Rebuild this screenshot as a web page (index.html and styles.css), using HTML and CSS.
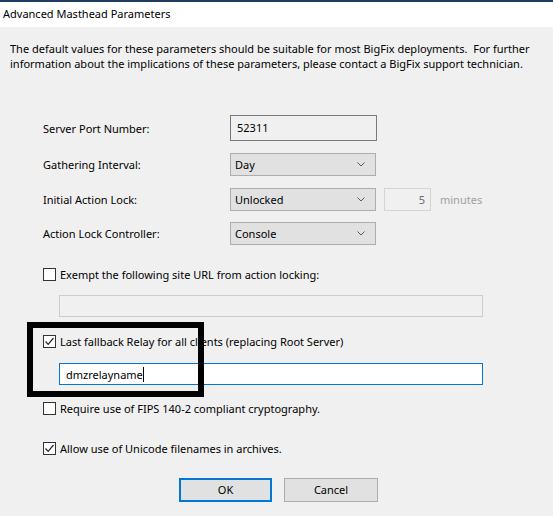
FILE: index.html
```html
<!DOCTYPE html>
<html>
<head>
<meta charset="utf-8">
<link rel="stylesheet" href="styles.css">
</head>
<body>
<div class="window">
  <div class="titlebar">Advanced Masthead Parameters</div>
  <div class="content">
    <p class="intro">The default values for these parameters should be suitable for most BigFix deployments.&nbsp; For further<br>information about the implications of these parameters, please contact a BigFix support technician.</p>
    <div class="form">
      <div class="row row-first">
        <span class="label">Server Port Number:</span>
        <div class="textbox readonly">52311</div>
      </div>
      <div class="row">
        <span class="label">Gathering Interval:</span>
        <div class="select"><span>Day</span><svg class="chev" width="8" height="5" viewBox="0 0 8 5"><path d="M0.5 0.5 L4 4 L7.5 0.5" fill="none" stroke="#5a5a5a" stroke-width="1"/></svg></div>
      </div>
      <div class="row">
        <span class="label">Initial Action Lock:</span>
        <div class="select"><span>Unlocked</span><svg class="chev" width="8" height="5" viewBox="0 0 8 5"><path d="M0.5 0.5 L4 4 L7.5 0.5" fill="none" stroke="#5a5a5a" stroke-width="1"/></svg></div>
        <div class="spin">5</div>
        <span class="unit">minutes</span>
      </div>
      <div class="row">
        <span class="label">Action Lock Controller:</span>
        <div class="select"><span>Console</span><svg class="chev" width="8" height="5" viewBox="0 0 8 5"><path d="M0.5 0.5 L4 4 L7.5 0.5" fill="none" stroke="#5a5a5a" stroke-width="1"/></svg></div>
      </div>
    </div>

    <div class="check c-exempt"><span class="box"></span><span>Exempt the following site URL from action locking:</span></div>
    <div class="wide disabled"></div>

    <div class="check c-relay"><span class="box checked"><svg width="11" height="11" viewBox="0 0 11 11"><path d="M1.5 5.5 L4.2 8.3 L9.5 2" fill="none" stroke="#222" stroke-width="1.2"/></svg></span><span>Last fallback Relay for all clients (replacing Root Server)</span></div>
    <div class="wide focused"><span>dmzrelayname</span><span class="caret"></span></div>

    <div class="check c-fips"><span class="box"></span><span>Require use of FIPS 140-2 compliant cryptography.</span></div>
    <div class="check c-unicode"><span class="box checked"><svg width="11" height="11" viewBox="0 0 11 11"><path d="M1.5 5.5 L4.2 8.3 L9.5 2" fill="none" stroke="#222" stroke-width="1.2"/></svg></span><span>Allow use of Unicode filenames in archives.</span></div>

    <div class="buttons">
      <div class="btn default">OK</div>
      <div class="btn">Cancel</div>
    </div>

    <div class="highlight"></div>
  </div>
</div>
</body>
</html>
```
FILE: styles.css
```css
html, body {
  margin: 0;
  padding: 0;
  background: #f0f0f0;
}
body {
  width: 553px;
  height: 516px;
  overflow: hidden;
  font-family: "Noto Sans", "Open Sans", sans-serif;
  font-size: 11px;
  color: #000;
}
.window {
  display: flex;
  flex-direction: column;
}
.titlebar {
  height: 25px;
  border-top: 2px solid #1f3d63;
  background: #ffffff;
  padding-left: 3px;
  line-height: 24px;
  font-size: 11px;
}
.content {
  position: relative;
  display: flex;
  flex-direction: column;
  padding: 0 10px;
}
.intro {
  margin: 14px 0 0;
  line-height: 15px;
  white-space: nowrap;
}
.form {
  margin: 44px 0 0 33px;
  display: flex;
  flex-direction: column;
}
.row {
  display: flex;
  align-items: center;
  height: 23px;
  margin-top: 12px;
}
.row:last-child { margin-top: 11px; }
.row-first {
  margin-top: 0;
  height: 26px;
}
.label {
  width: 187px;
}
.textbox {
  box-sizing: border-box;
  width: 147px;
  height: 26px;
  border: 1px solid #7a7a7a;
  background: #f0f0f0;
  padding-left: 6px;
  line-height: 23px;
}
.select {
  box-sizing: border-box;
  width: 146px;
  height: 23px;
  border: 1px solid #adadad;
  background: #e1e1e1;
  display: flex;
  align-items: center;
  justify-content: space-between;
  padding: 0 10px 0 4px;
}
.chev { display: block; }
.spin {
  box-sizing: border-box;
  margin-left: 8px;
  width: 47px;
  height: 23px;
  border: 1px solid #d4d4d4;
  background: #f0f0f0;
  color: #6d6d6d;
  text-align: right;
  padding-right: 5px;
  line-height: 21px;
}
.unit {
  margin-left: 9px;
  color: #a0a0a0;
}
.check {
  display: flex;
  align-items: center;
  height: 13px;
  margin-left: 33px;
  gap: 4px;
  line-height: 13px;
}
.box {
  box-sizing: border-box;
  width: 13px;
  height: 13px;
  border: 1px solid #333333;
  background: #ffffff;
  display: flex;
  align-items: center;
  justify-content: center;
}
.box svg { display: block; }
.c-exempt { margin-top: 23px; }
.c-relay { margin-top: 18px; }
.c-fips { margin-top: 17px; }
.c-unicode { margin-top: 27px; }
.wide {
  box-sizing: border-box;
  margin-left: 49px;
  width: 424px;
  height: 22px;
  display: flex;
  align-items: center;
  padding-left: 6px;
}
.disabled {
  margin-top: 14px;
  border: 1px solid #cccccc;
  background: #f0f0f0;
}
.focused {
  margin-top: 15px;
  border: 1px solid #0078d7;
  background: #ffffff;
}
.caret {
  width: 1px;
  height: 15px;
  background: #000;
}
.buttons {
  display: flex;
  gap: 12px;
  margin: 23px 0 0 169px;
}
.btn {
  box-sizing: border-box;
  width: 94px;
  height: 24px;
  border: 1px solid #adadad;
  background: #e1e1e1;
  text-align: center;
  line-height: 22px;
}
.btn.default {
  width: 93px;
  border: 2px solid #0078d7;
  line-height: 20px;
}
.highlight {
  position: absolute;
  left: 27px;
  top: 295px;
  width: 165px;
  height: 63px;
  border: 6px solid #000;
}
```
